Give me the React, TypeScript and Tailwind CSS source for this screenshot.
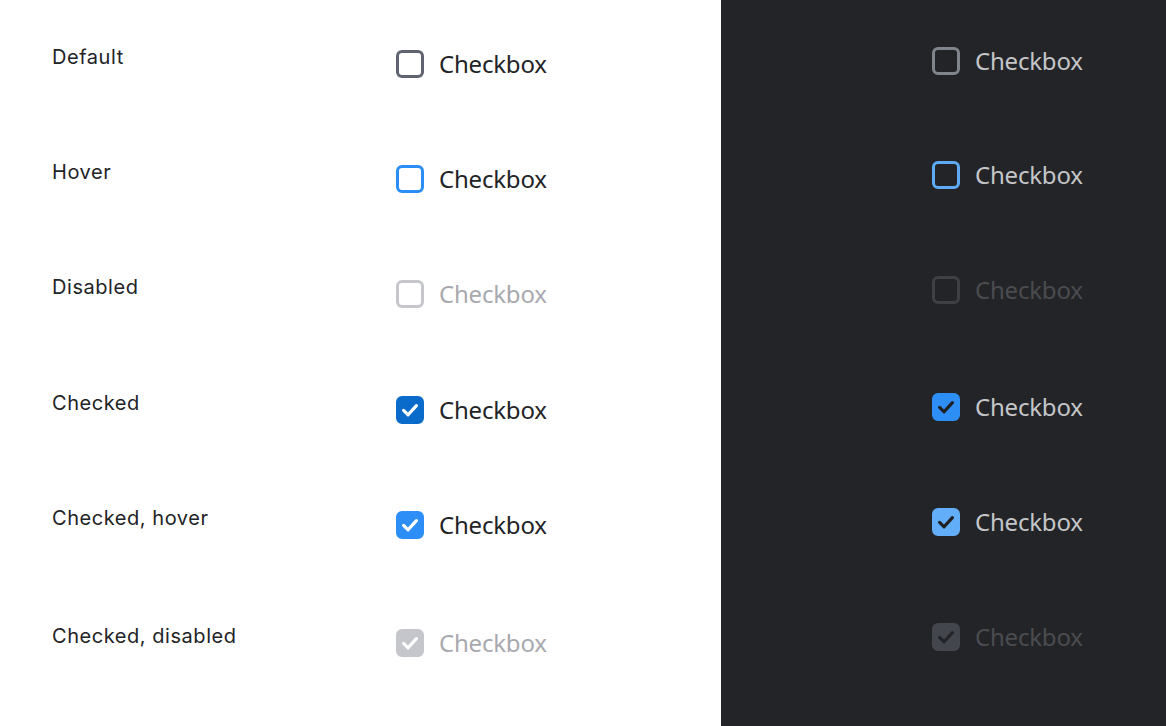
import React from "react";

type Box = { border: string; fill: string; check?: string };

function Check({ color }: { color: string }) {
  return (
    <svg width="28" height="28" viewBox="0 0 28 28" className="absolute inset-0">
      <path d="M7.6 14.4 L12.1 18.8 L20.4 9.6" fill="none" stroke={color} strokeWidth="3.2" strokeLinecap="round" strokeLinejoin="round" />
    </svg>
  );
}

function CheckboxItem({ box, text }: { box: Box; text: string }) {
  return (
    <div className="flex h-[32px] items-center gap-[15px]">
      <div
        className="relative h-[28px] w-[28px] rounded-[6px] border-[3px]"
        style={{ borderColor: box.border, backgroundColor: box.fill }}
      >
        {box.check && (
          <div className="absolute -left-[3px] -top-[3px]">
            <Check color={box.check} />
          </div>
        )}
      </div>
      <span
        className="text-[24px] leading-[32px] tracking-[-0.2px]"
        style={{ color: text, fontFamily: '"Noto Sans", "Open Sans", sans-serif' }}
      >
        Checkbox
      </span>
    </div>
  );
}

const lightRows: { label: string; box: Box; text: string; h: string }[] = [
  { label: "Default", box: { border: "#5f6470", fill: "transparent" }, text: "#222326", h: "h-[115px]" },
  { label: "Hover", box: { border: "#2b8ef6", fill: "transparent" }, text: "#222326", h: "h-[115px]" },
  { label: "Disabled", box: { border: "#c6c7cb", fill: "transparent" }, text: "#a8a9ae", h: "h-[116px]" },
  { label: "Checked", box: { border: "#0b6bcb", fill: "#0b6bcb", check: "#ffffff" }, text: "#222326", h: "h-[115px]" },
  { label: "Checked, hover", box: { border: "#2e8ef7", fill: "#2e8ef7", check: "#ffffff" }, text: "#222326", h: "h-[118px]" },
  { label: "Checked, disabled", box: { border: "#c5c6cb", fill: "#c5c6cb", check: "#ffffff" }, text: "#a8a9ae", h: "h-[80px]" },
];

const darkRows: { box: Box; text: string; h: string }[] = [
  { box: { border: "#80858d", fill: "transparent" }, text: "#c5c6c9", h: "h-[114px]" },
  { box: { border: "#5eaaf5", fill: "transparent" }, text: "#c5c6c9", h: "h-[115px]" },
  { box: { border: "#3e4045", fill: "transparent" }, text: "#4a4c51", h: "h-[117px]" },
  { box: { border: "#2d8ef5", fill: "#2d8ef5", check: "#1f2023" }, text: "#c5c6c9", h: "h-[115px]" },
  { box: { border: "#63aef8", fill: "#63aef8", check: "#1f2023" }, text: "#c5c6c9", h: "h-[115px]" },
  { box: { border: "#43464d", fill: "#43464d", check: "#232427" }, text: "#4a4c51", h: "h-[80px]" },
];

export default function App() {
  return (
    <div className="flex h-[726px] w-[1166px] overflow-hidden">
      <div className="w-[721px] bg-white pt-[43px]" style={{ fontFamily: 'Inter, Roboto, "Liberation Sans", sans-serif' }}>
        {lightRows.map((r) => (
          <div key={r.label} className={`flex items-start ${r.h}`}>
            <div className="w-[396px] pl-[52px] text-[20px] leading-[28px] tracking-[0.55px] text-[#222326]">{r.label}</div>
            <div className="mt-[5px]">
              <CheckboxItem box={r.box} text={r.text} />
            </div>
          </div>
        ))}
      </div>
      <div className="flex-1 bg-[#232427] pt-[45px] pl-[211px]">
        {darkRows.map((r, i) => (
          <div key={i} className={`flex items-start ${r.h}`}>
            <CheckboxItem box={r.box} text={r.text} />
          </div>
        ))}
      </div>
    </div>
  );
}
